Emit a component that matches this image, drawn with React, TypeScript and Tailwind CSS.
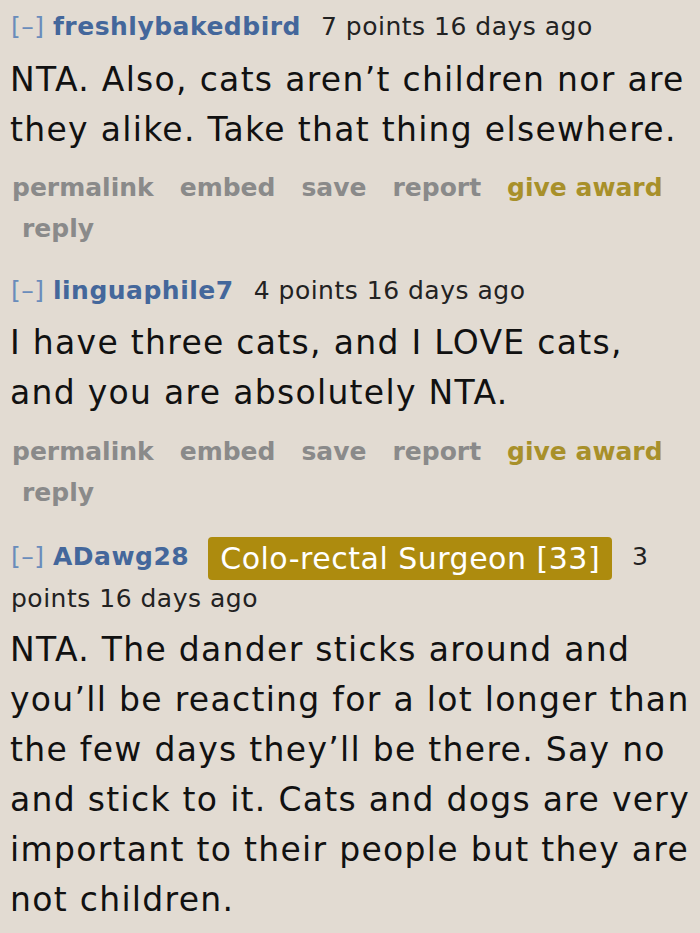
import React from "react";

const font = { fontFamily: '"DejaVu Sans", Verdana, sans-serif' };

function Actions() {
  return (
    <div className="flex flex-wrap gap-x-[26px] pl-[12px] text-[25px] font-bold leading-[41px] text-[#8a8a8a]">
      <span>permalink</span>
      <span>embed</span>
      <span>save</span>
      <span>report</span>
      <span className="text-[#a8902a]">give award</span>
      <span className="pl-[10px]">reply</span>
    </div>
  );
}

function Header({ user, points, flair }: { user: string; points: string; flair?: string }) {
  return (
    <div className="pl-[11px] pr-[8px] text-[25px] leading-[41px] tracking-[0.5px] text-[#222]">
      <span className="text-[#6a8cbb]">[–]</span>{" "}
      <span className="font-bold text-[#44679b]">{user}</span>
      {flair && (
        <span className="-my-[2px] ml-[19px] inline-block rounded-[4px] bg-[#ad8b0e] px-[12px] align-middle text-[30px] leading-[43px] text-white">
          {flair}
        </span>
      )}
      <span className="ml-[20px]">{points}</span>
    </div>
  );
}

function Body({ lines }: { lines: string[] }) {
  return (
    <p className="pl-[10px] text-[33px] leading-[50px] tracking-[1.3px] text-[#111]">
      {lines.map((l, i) => (
        <span key={i} className="block whitespace-nowrap">
          {l}
        </span>
      ))}
    </p>
  );
}

export default function App() {
  return (
    <div style={font} className="min-h-[933px] w-[700px] overflow-hidden bg-[#e2dbd2] pt-[6px]">
      <Header user="freshlybakedbird" points="7 points 16 days ago" />
      <div className="mt-[8px]">
        <Body lines={["NTA. Also, cats aren’t children nor are", "they alike. Take that thing elsewhere."]} />
      </div>
      <div className="mt-[12px]">
        <Actions />
      </div>

      <div className="mt-[21px]">
        <Header user="linguaphile7" points="4 points 16 days ago" />
      </div>
      <div className="mt-[7px]">
        <Body lines={["I have three cats, and I LOVE cats,", "and you are absolutely NTA."]} />
      </div>
      <div className="mt-[13px]">
        <Actions />
      </div>

      <div className="mt-[23px]">
        <Header user="ADawg28" flair="Colo-rectal Surgeon [33]" points="3 points 16 days ago" />
      </div>
      <div className="mt-[6px]">
        <Body
          lines={[
            "NTA. The dander sticks around and",
            "you’ll be reacting for a lot longer than",
            "the few days they’ll be there. Say no",
            "and stick to it. Cats and dogs are very",
            "important to their people but they are",
            "not children.",
          ]}
        />
      </div>
    </div>
  );
}
